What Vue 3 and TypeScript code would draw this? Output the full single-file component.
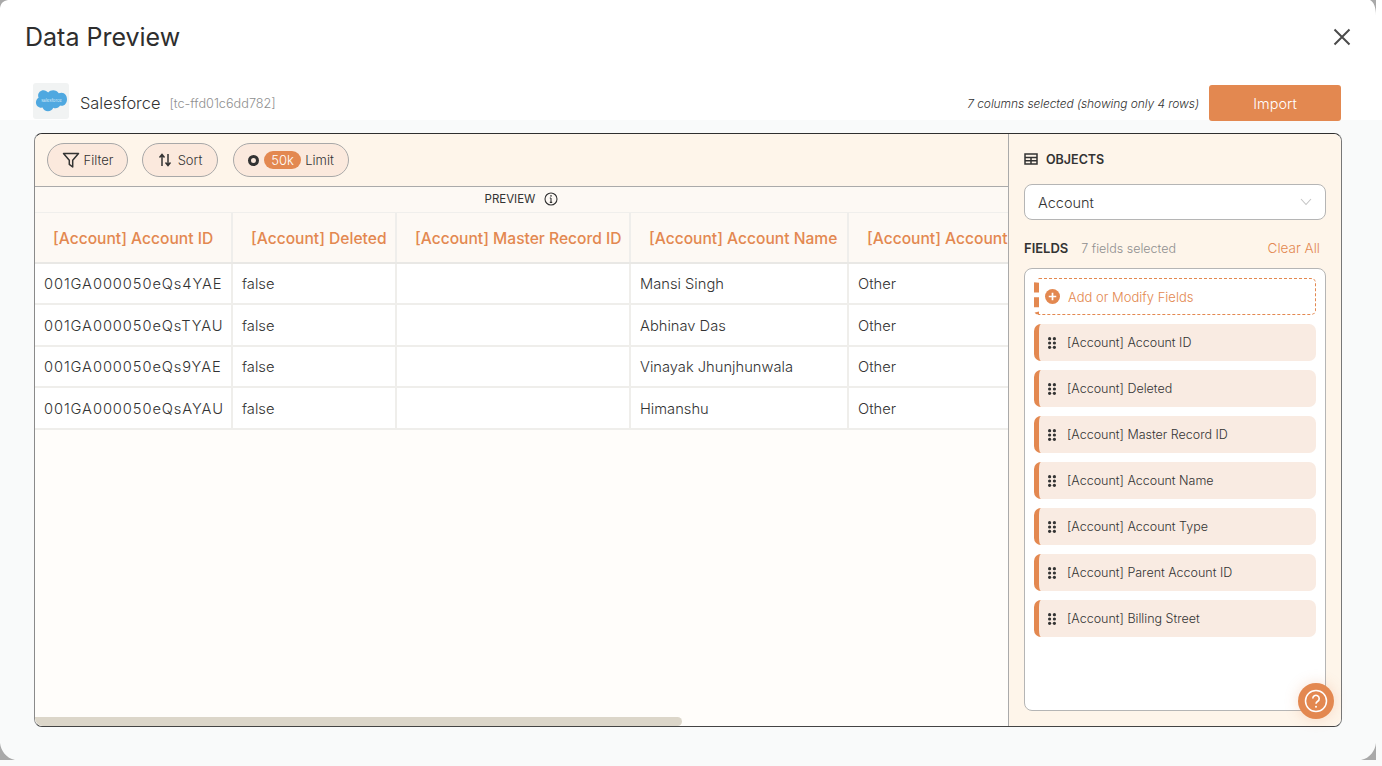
<script setup lang="ts">
const columns = [
  { label: '[Account] Account ID', cls: 'c1' },
  { label: '[Account] Deleted', cls: 'c2' },
  { label: '[Account] Master Record ID', cls: 'c3' },
  { label: '[Account] Account Name', cls: 'c4' },
  { label: '[Account] Account Type', cls: 'c5' },
]

const rows = [
  ['001GA000050eQs4YAE', 'false', '', 'Mansi Singh', 'Other'],
  ['001GA000050eQsTYAU', 'false', '', 'Abhinav Das', 'Other'],
  ['001GA000050eQs9YAE', 'false', '', 'Vinayak Jhunjhunwala', 'Other'],
  ['001GA000050eQsAYAU', 'false', '', 'Himanshu', 'Other'],
]

const fields = [
  '[Account] Account ID',
  '[Account] Deleted',
  '[Account] Master Record ID',
  '[Account] Account Name',
  '[Account] Account Type',
  '[Account] Parent Account ID',
  '[Account] Billing Street',
]
</script>

<template>
  <div class="page">
    <div class="modal">
      <header class="title-bar">
        <h1>Data Preview</h1>
        <svg class="close" viewBox="0 0 18 18" width="18" height="18">
          <path d="M1.500 1.500l15 15M16.500 1.500l-15 15" stroke="#4b4b4b" stroke-width="2" fill="none" />
        </svg>
      </header>

      <div class="source-bar">
        <div class="logo">
          <svg viewBox="0 0 34 26" width="32" height="26">
            <path
              d="M14 4c1.300-1.600 3.200-2.500 5.300-2.500 2.500 0 4.700 1.300 5.900 3.300 1-.4 2-.6 3-.6 3.700 0 5.800 3.200 5.800 6.900s-2.100 7-5.800 7c-.5 0-1-.1-1.500-.2-1 1.700-2.800 2.900-4.900 2.900-.9 0-1.700-.2-2.400-.6-.9 2.200-3.100 3.800-5.600 3.800-2.700 0-4.900-1.700-5.800-4-.4.100-.8.100-1.200.1C3.500 20.100 1 17.600 1 14.500c0-2.100 1.100-3.900 2.800-4.900-.3-.8-.5-1.600-.5-2.400 0-3.100 2.500-5.700 5.700-5.700 2 0 3.800 1 5 2.500z"
              fill="#4fa8e0"
            />
            <text x="17.500" y="14.500" text-anchor="middle" font-size="4.500" fill="#d8ecf9">salesforce</text>
          </svg>
        </div>
        <span class="source-name">Salesforce</span>
        <span class="source-id">[tc-ffd01c6dd782]</span>
        <span class="selection-note">7 columns selected (showing only 4 rows)</span>
        <button class="import">Import</button>
      </div>

      <div class="body">
        <div class="panel">
          <section class="main">
            <div class="toolbar">
              <div class="pill filter">
                <svg viewBox="0 0 18 18" width="18" height="18">
                  <path d="M1.500 2.500h15l-5.800 6.800V16l-3.400-2.600V9.300z" fill="none" stroke="#333" stroke-width="1.500" stroke-linejoin="round" />
                </svg>
                <span>Filter</span>
              </div>
              <div class="pill sort">
                <svg viewBox="0 0 14 14" width="14" height="14">
                  <path d="M4 13V2M1.500 4.500L4 1.500l2.500 3M10 1v11M7.500 9.500l2.500 3 2.500-3" fill="none" stroke="#333" stroke-width="1.500" />
                </svg>
                <span>Sort</span>
              </div>
              <div class="pill limit">
                <span class="dot"></span>
                <span class="badge">50k</span>
                <span>Limit</span>
              </div>
            </div>

            <div class="preview-label">
              <span>PREVIEW</span>
              <svg viewBox="0 0 14 14" width="14" height="14">
                <circle cx="7" cy="7" r="6" fill="none" stroke="#333" stroke-width="1.100" />
                <path d="M7 6v4.200M5.800 10.400h2.400M5.800 6h1.200" stroke="#333" stroke-width="1.100" fill="none" />
                <circle cx="7" cy="3.900" r=".8" fill="#333" />
              </svg>
            </div>

            <div class="table-wrap">
              <table>
                <thead>
                  <tr>
                    <th v-for="col in columns" :key="col.label" :class="col.cls">{{ col.label }}</th>
                  </tr>
                </thead>
                <tbody>
                  <tr v-for="row in rows" :key="row[0]">
                    <td v-for="(cell, i) in row" :key="i" :class="{ 'id-cell': i === 0 }">{{ cell }}</td>
                  </tr>
                </tbody>
              </table>
            </div>
            <div class="scrollbar"><div class="thumb"></div></div>
          </section>

          <aside class="side">
            <div class="objects-title">
              <svg viewBox="0 0 14 12" width="14" height="12">
                <path d="M1 1h12v10H1zM1 4.500h12M1 7.800h12M7 4.500V11" fill="none" stroke="#333" stroke-width="1.500" />
              </svg>
              <span>OBJECTS</span>
            </div>
            <div class="select">
              <span>Account</span>
              <svg viewBox="0 0 12 8" width="12" height="8">
                <path d="M1 1l5 5.500L11 1" fill="none" stroke="#c4c4c4" stroke-width="1.100" />
              </svg>
            </div>
            <div class="fields-head">
              <strong>FIELDS</strong>
              <span class="count">7 fields selected</span>
              <span class="clear">Clear All</span>
            </div>
            <div class="field-list">
              <div class="add-field">
                <span class="plus">
                  <svg viewBox="0 0 16 16" width="15" height="15">
                    <circle cx="8" cy="8" r="8" fill="#e38850" />
                    <path d="M8 4v8M4 8h8" stroke="#fff" stroke-width="1.800" />
                  </svg>
                </span>
                <span>Add or Modify Fields</span>
              </div>
              <div v-for="field in fields" :key="field" class="field">
                <svg class="grip" viewBox="0 0 8 12" width="8" height="12">
                  <g fill="#333">
                    <circle cx="1.600" cy="1.700" r="1.600" />
                    <circle cx="6.400" cy="1.700" r="1.600" />
                    <circle cx="1.600" cy="6" r="1.600" />
                    <circle cx="6.400" cy="6" r="1.600" />
                    <circle cx="1.600" cy="10.300" r="1.600" />
                    <circle cx="6.400" cy="10.300" r="1.600" />
                  </g>
                </svg>
                <span>{{ field }}</span>
              </div>
            </div>
          </aside>

          <button class="help">
            <svg viewBox="0 0 24 24" width="24" height="24">
              <circle cx="12" cy="12" r="10.500" fill="none" stroke="#fff" stroke-width="1.500" />
              <path d="M8.800 9.500a3.200 3.200 0 1 1 4.900 2.700c-1.100.7-1.700 1.300-1.700 2.600" fill="none" stroke="#fff" stroke-width="1.600" />
              <circle cx="12" cy="17.700" r="1" fill="#fff" />
            </svg>
          </button>
        </div>
      </div>
    </div>
    <i class="corner tl"></i>
    <i class="corner tr"></i>
    <i class="corner bl"></i>
    <i class="corner br"></i>
  </div>
</template>

<style>
body {
  margin: 0;
  background: #fff;
}
</style>

<style scoped>
.page {
  position: relative;
  width: 1382px;
  height: 766px;
  overflow: hidden;
  font-family: Inter, "Noto Sans", sans-serif;
  color: #333;
  background: linear-gradient(#fff 120px, #f9fafa 120px);
}

.modal {
  width: 1376px;
  height: 760px;
  display: flex;
  flex-direction: column;
}

.title-bar {
  height: 72px;
  padding: 1px 25px 0 25px;
  display: flex;
  align-items: center;
  justify-content: space-between;
  flex: none;
  box-sizing: border-box;
}

h1 {
  margin: 0;
  font-size: 25px;
  font-weight: 400;
  color: #2e2e2e;
}

.source-bar {
  height: 48px;
  padding: 14px 35px 0 33px;
  display: flex;
  align-items: center;
  flex: none;
  box-sizing: border-box;
}

.logo {
  width: 36px;
  height: 36px;
  margin-bottom: 4px;
  background: #f1f3f3;
  border-radius: 3px;
  display: flex;
  align-items: center;
  justify-content: center;
  font-family: Inter, sans-serif;
}

.source-name {
  margin-left: 11px;
  font-size: 16.400px;
  font-weight: 300;
}

.source-id {
  margin-left: 9px;
  font-size: 12.700px;
  font-weight: 300;
  color: #8f8f8f;
}

.selection-note {
  margin-left: auto;
  font-size: 12px;
  font-style: italic;
  font-weight: 300;
  letter-spacing: -0.08px;
}

.import {
  width: 132px;
  height: 36px;
  margin-left: 10px;
  border: none;
  border-radius: 3px;
  background: #e38850;
  color: #fff;
  font: 300 14.500px Inter, sans-serif;
}

.body {
  flex: 1;
  min-height: 0;
  padding: 13px 34px 33px 34px;
  display: flex;
}

.panel {
  position: relative;
  flex: 1;
  min-width: 0;
  display: flex;
  border: 1px solid #555;
  border-color: #2f2f2f #777 #444 #8a8a8a;
  border-radius: 8px;
  background: #fffdfa;
}

.main {
  flex: 1;
  min-width: 0;
  display: flex;
  flex-direction: column;
  border-radius: 8px 0 0 8px;
  overflow: hidden;
}

.toolbar {
  height: 53px;
  flex: none;
  display: flex;
  align-items: center;
  gap: 14px;
  padding-left: 12px;
  background: #fef5ea;
  border-bottom: 1px solid #aaa;
  box-sizing: border-box;
}

.pill {
  height: 34px;
  display: flex;
  align-items: center;
  justify-content: center;
  box-sizing: border-box;
  border: 1px solid #a8a8a8;
  border-radius: 17px;
  background: #fbe9dd;
  font-size: 13px;
  font-weight: 300;
  color: #333;
}

.filter {
  width: 81px;
  gap: 4px;
}

.sort {
  width: 76px;
  gap: 6px;
}

.limit {
  width: 116px;
  gap: 4px;
  margin-left: 1px;
}

.dot {
  width: 11px;
  height: 11px;
  margin-right: 1px;
  border-radius: 50%;
  border: 3px solid #333;
  box-sizing: border-box;
}

.badge {
  width: 37px;
  height: 18px;
  line-height: 18px;
  text-align: center;
  border-radius: 9px;
  background: #e38850;
  color: #fff;
}

.preview-label {
  height: 26px;
  flex: none;
  display: flex;
  align-items: center;
  justify-content: center;
  gap: 9px;
  padding-bottom: 2px;
  box-sizing: border-box;
  font-size: 11.500px;
  background: #fdf9f4;
  border-bottom: 1px solid #f0efec;
}

.table-wrap {
  flex: 1;
  min-height: 0;
  overflow: hidden;
}

table {
  width: 1100px;
  table-layout: fixed;
  border-collapse: collapse;
}

th {
  height: 49.500px;
  padding: 3px 0 0 18px;
  font-size: 15.600px;
  font-weight: 500;
  color: #e38850;
  text-align: left;
  white-space: nowrap;
  overflow: hidden;
  background: #fdf9f4;
  border-right: 2px solid #efeeeb;
  border-bottom: 2px solid #e9e8e5;
  box-sizing: border-box;
}

th.c1 { width: 197px; }
th.c2 { width: 164px; }
th.c3 { width: 234px; }
th.c4 { width: 218px; }

td {
  height: 41.500px;
  padding: 2px 9px 0;
  font-size: 14.700px;
  font-weight: 300;
  color: #333;
  background: #fff;
  white-space: nowrap;
  border-right: 2px solid #efeeeb;
  border-bottom: 2px solid #efeeeb;
  box-sizing: border-box;
}

td.id-cell {
  letter-spacing: 0.9px;
}

.scrollbar {
  height: 9px;
  flex: none;
  background: #fffdfa;
}

.thumb {
  width: 647px;
  height: 9px;
  border-radius: 0 5px 5px 5px;
  background: #dcd6c9;
}

.side {
  width: 333px;
  flex: none;
  box-sizing: border-box;
  border-left: 1px solid #aaa;
  background: #fef5ea;
  border-radius: 0 8px 8px 0;
  padding: 0 15px 15px;
  display: flex;
  flex-direction: column;
}

.objects-title {
  height: 50px;
  flex: none;
  display: flex;
  align-items: center;
  gap: 8px;
  font-size: 12.500px;
  font-weight: 600;
}

.select {
  height: 36px;
  flex: none;
  box-sizing: border-box;
  border: 1px solid #b5b5b5;
  border-radius: 8px;
  background: #fff;
  display: flex;
  align-items: center;
  justify-content: space-between;
  padding: 0 13px;
  font-size: 14.500px;
  font-weight: 300;
}

.fields-head {
  height: 48px;
  flex: none;
  display: flex;
  align-items: center;
  box-sizing: border-box;
  padding-top: 8px;
  font-size: 12.500px;
}

.fields-head strong {
  font-size: 13px;
  font-weight: 600;
}

.count {
  margin-left: 13px;
  font-weight: 300;
  color: #8f8f8f;
}

.clear {
  margin-left: auto;
  margin-right: 6px;
  font-size: 13.500px;
  font-weight: 300;
  color: #e38850;
}

.field-list {
  flex: 1;
  min-height: 0;
  box-sizing: border-box;
  border: 1px solid #b5b5b5;
  border-radius: 8px;
  background: #fff;
  padding: 9px;
  display: flex;
  flex-direction: column;
  gap: 9px;
}

.add-field {
  height: 37px;
  flex: none;
  box-sizing: border-box;
  display: flex;
  align-items: center;
  gap: 8px;
  padding-left: 6px;
  font-size: 13px;
  font-weight: 300;
  color: #e38850;
  border: 1px dashed #e38850;
  border-left: 5px dashed #e38850;
  border-radius: 5px;
}

.plus {
  display: flex;
}

.field {
  height: 37px;
  flex: none;
  box-sizing: border-box;
  display: flex;
  align-items: center;
  gap: 11px;
  padding-left: 9px;
  font-size: 12.500px;
  font-weight: 300;
  background: #f9ebe2;
  border-left: 5px solid #e38850;
  border-radius: 7px;
}

.help {
  position: absolute;
  right: 7px;
  bottom: 7px;
  width: 36px;
  height: 36px;
  padding: 0;
  border: none;
  border-radius: 50%;
  background: #e38850;
  display: flex;
  align-items: center;
  justify-content: center;
  box-shadow: 0 0 14px rgba(227, 136, 80, 0.25);
}

.corner {
  position: absolute;
  background: #a9a9a9;
}

.tl {
  left: 0;
  top: 0;
  width: 8px;
  height: 8px;
  clip-path: path("M0 0H8C3 1 1 3 0 8Z");
}

.tr {
  left: 1362px;
  top: 0;
  width: 14px;
  height: 16px;
  clip-path: path("M8 0H14V16C14 8 12 2 8 0Z");
}

.bl {
  left: 0;
  top: 743px;
  width: 15px;
  height: 17px;
  clip-path: path("M0 0C1 8 6 15 15 17H0Z");
}

.br {
  left: 1361px;
  top: 743px;
  width: 15px;
  height: 17px;
  clip-path: path("M15 0C14 8 9 15 0 17H15Z");
}
</style>
